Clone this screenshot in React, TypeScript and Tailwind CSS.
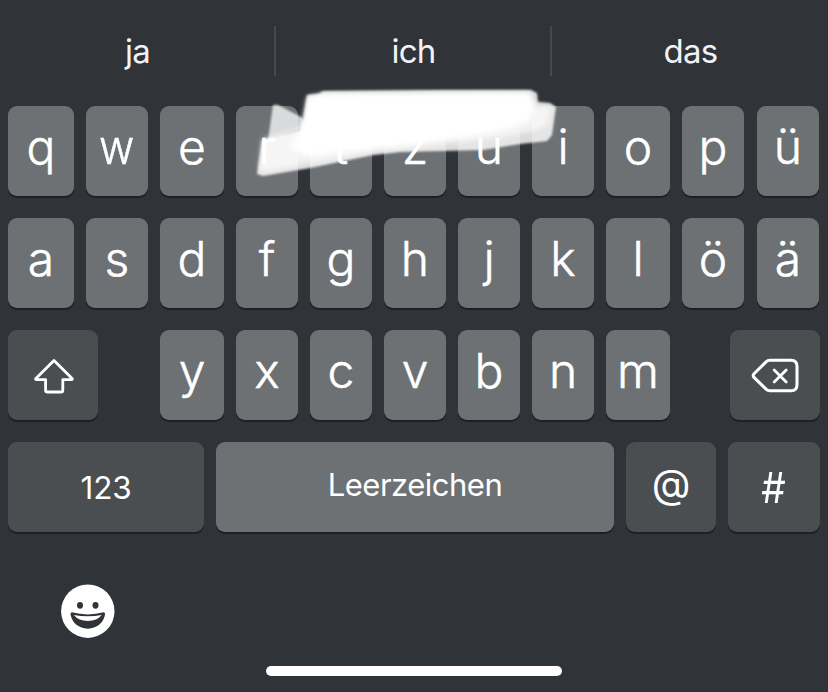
import React from "react";
import clsx from "clsx";

const suggestions = ["ja", "ich", "das"];

const letterRows = [
  ["q", "w", "e", "r", "t", "z", "u", "i", "o", "p", "ü"],
  ["a", "s", "d", "f", "g", "h", "j", "k", "l", "ö", "ä"],
];

const bottomLetters = ["y", "x", "c", "v", "b", "n", "m"];

type KeyProps = {
  children: React.ReactNode;
  variant?: "letter" | "special" | "space";
  label?: string;
  className?: string;
};

const Key = ({ children, variant = "letter", label, className }: KeyProps) => (
  <button
    type="button"
    aria-label={label}
    className={clsx(
      "flex h-[90px] items-center justify-center rounded-[9px] shadow-[0_2px_0_#1e2124]",
      variant === "letter" &&
        "bg-[#6d7174] pb-[9px] text-[48px] font-light [-webkit-text-stroke:0.5px_white]",
      variant === "special" && "bg-[#4a4e50]",
      variant === "space" && "bg-[#6d7174]",
      className
    )}
  >
    {children}
  </button>
);

const ShiftIcon = () => (
  <svg
    width="44"
    height="40"
    viewBox="0 0 44 40"
    fill="none"
    stroke="currentColor"
    strokeWidth="2.8"
    strokeLinejoin="round"
  >
    <path d="M23 5.4 4.9 23.4Q3.9 24.7 5.7 24.7H14.6V35.2Q14.6 37 16.4 37H30Q31.8 37 31.8 35.2V24.7H40.3Q42.1 24.7 41.1 23.4Z" />
  </svg>
);

const BackspaceIcon = () => (
  <svg
    width="50"
    height="38"
    viewBox="0 0 50 38"
    fill="none"
    stroke="currentColor"
    strokeWidth="3"
    strokeLinecap="round"
    strokeLinejoin="round"
  >
    <path d="M20 4.3H41Q47 4.3 47 10.3V28.7Q47 34.7 41 34.7H20Q17.7 34.7 16 33.1L4 21.4Q2.4 19.6 4 17.8L16 5.9Q17.7 4.3 20 4.3Z" />
    <path d="M24.2 13.9 36.2 25.9M36.2 13.9 24.2 25.9" strokeWidth="2.8" />
  </svg>
);

const EmojiIcon = () => (
  <svg width="54" height="54" viewBox="0 0 54 54">
    <circle cx="26.8" cy="27.2" r="26.7" fill="#fff" />
    <ellipse cx="19" cy="21.3" rx="3" ry="3.4" fill="#303337" />
    <ellipse cx="34.5" cy="21.3" rx="3" ry="3.4" fill="#303337" />
    <path
      d="M10.8 28.3Q9.2 28.6 9.6 30.6C11 39 18 44.7 26.8 44.7S42.6 39 44 30.6Q44.4 28.6 42.8 28.3Q35 30.4 26.8 30.4T10.8 28.3Z"
      fill="#303337"
    />
    <path d="M12.8 31.1Q26.8 33.6 40.8 31.1Q36 37 26.8 37T12.8 31.1Z" fill="#fff" />
  </svg>
);

// Marker strokes over the top row
const Scribble = () => (
  <svg
    className="pointer-events-none absolute left-[250px] top-[80px]"
    width="320"
    height="105"
    viewBox="250 80 320 105"
  >
    <defs>
      <filter id="soft">
        <feGaussianBlur stdDeviation="1.3" />
      </filter>
      <filter id="softer" x="-10%" y="-20%" width="120%" height="140%">
        <feGaussianBlur stdDeviation="2.8" />
      </filter>
    </defs>
    <path
      d="M273 105Q278 104 282 107L303 118 306 128 268 140Z"
      fill="#fff"
      fillOpacity="0.74"
      filter="url(#soft)"
    />
    <path
      d="M262 140 301 130 304 117 307 95 318 94 323 91 440 90 531 90 537 93 538 102 550 103 556 107 552 135 547 141 520 144 483 150 400 152 373 155 310 168 263 176 257 174Z"
      fill="#fff"
      fillOpacity="0.82"
      filter="url(#soft)"
    />
    <path
      d="M262 139 303 128 307 97 325 94 529 93 537 106 551 107 548 125 530 132 500 137 460 142 405 148 370 152 305 164 270 171 259 170Z"
      fill="#fff"
      fillOpacity="0.62"
      filter="url(#softer)"
    />
    <path
      d="M301 128 309 97 325 94 529 93 534 106 530 121 500 130 465 137 405 145 370 149 305 156 290 148Z"
      fill="#fff"
      filter="url(#softer)"
    />
  </svg>
);

const App: React.FC = () => {
  return (
    <main className="relative flex h-[692px] w-[828px] flex-col overflow-hidden bg-[#303337] font-['Inter',sans-serif] text-white">
      {/* Suggestion bar */}
      <div className="grid h-[106px] grid-cols-3 pt-[26px]">
        {suggestions.map((word, i) => (
          <div
            key={word}
            className={clsx(
              "flex h-[50px] items-center justify-center pl-px pt-0.5 text-[33px] tracking-[-0.8px] text-[#f2f2f6]",
              i < 2 && "border-r-2 border-[#47494d]"
            )}
          >
            {word}
          </div>
        ))}
      </div>

      <div className="flex flex-col gap-[22px] pl-2">
        {letterRows.map((row) => (
          <div
            key={row[0]}
            className="grid grid-cols-[66px_62px_64px_62px_62px_62px_62px_62px_64px_62px_63px] gap-x-3"
          >
            {row.map((letter) => (
              <Key key={letter} className="last:ml-px">
                <span className={clsx(letter === "w" && "scale-x-90")}>{letter}</span>
              </Key>
            ))}
          </div>
        ))}

        <div className="flex pr-2">
          <Key variant="special" label="Umschalt" className="w-[90px]">
            <ShiftIcon />
          </Key>
          <div className="ml-[62px] grid grid-cols-[64px_62px_62px_62px_62px_62px_64px] gap-x-3">
            {bottomLetters.map((letter) => (
              <Key key={letter}>{letter}</Key>
            ))}
          </div>
          <Key variant="special" label="Löschen" className="ml-auto w-[90px]">
            <BackspaceIcon />
          </Key>
        </div>

        <div className="grid grid-cols-[196px_398px_90px_92px] gap-x-3">
          <Key variant="special" className="pt-px text-[31.5px] tracking-[-0.2px]">
            123
          </Key>
          <Key variant="space" className="pb-[3px] text-[31px] tracking-[-0.5px]">
            Leerzeichen
          </Key>
          <Key variant="special" className="pb-1.5 text-[40px]">
            @
          </Key>
          <Key variant="special" className="text-[43px]">
            <span className="scale-x-90">#</span>
          </Key>
        </div>
      </div>

      <button type="button" aria-label="Emoji" className="ml-[61px] mt-[52px] w-[54px]">
        <EmojiIcon />
      </button>

      {/* Home indicator */}
      <div className="mx-auto mt-[28px] h-[10px] w-[296px] rounded-full bg-white" />

      <Scribble />
    </main>
  );
};

export default App;
